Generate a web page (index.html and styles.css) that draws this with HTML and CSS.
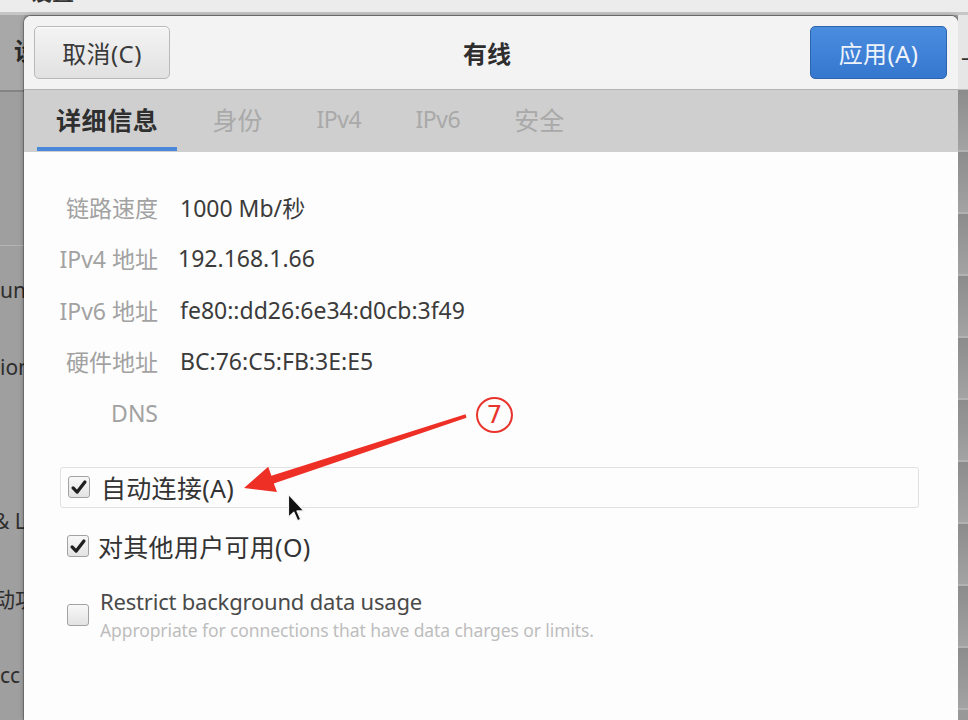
FILE: index.html
```html
<!DOCTYPE html>
<html lang="zh-CN">
<head>
<meta charset="utf-8">
<title>有线</title>
<link rel="stylesheet" href="styles.css">
</head>
<body>
<div class="screen">
  <div class="topbar"><span class="topbar-label">设置</span></div>
  <div class="main">
    <aside class="bg-left">
      <div class="bl-head"><span class="bl-title">设置</span></div>
      <ul class="bl-list">
        <li class="bl-item"></li>
        <li class="bl-item bl-sep"></li>
        <li class="bl-item"><span>und</span></li>
        <li class="bl-item"><span>ion</span></li>
        <li class="bl-item"></li>
        <li class="bl-item"><span class="shift">&amp; L</span></li>
        <li class="bl-item"><span class="shift">动功</span></li>
        <li class="bl-item"><span>cc</span></li>
      </ul>
    </aside>

    <section class="dialog">
      <header class="dlg-header">
        <button class="btn">取消(C)</button>
        <h1 class="dlg-title">有线</h1>
        <button class="btn btn-primary">应用(A)</button>
      </header>
      <nav class="tabs">
        <span class="tab active">详细信息</span>
        <span class="tab">身份</span>
        <span class="tab tab-latin">IPv4</span>
        <span class="tab tab-latin">IPv6</span>
        <span class="tab">安全</span>
      </nav>
      <div class="content">
        <dl class="details">
          <dt>链路速度</dt><dd>1000 Mb/秒</dd>
          <dt>IPv4 地址</dt><dd class="ip4">192.168.1.66</dd>
          <dt>IPv6 地址</dt><dd>fe80::dd26:6e34:d0cb:3f49</dd>
          <dt>硬件地址</dt><dd>BC:76:C5:FB:3E:E5</dd>
          <dt>DNS</dt><dd></dd>
        </dl>
        <div class="checks">
          <label class="check focused">
            <span class="box checked"><svg viewBox="0 0 22 22"><path d="M4.5 11.5 L9 16 L17.5 5"/></svg></span>
            <span class="check-label">自动连接(A)</span>
          </label>
          <label class="check second">
            <span class="box checked"><svg viewBox="0 0 22 22"><path d="M4.5 11.5 L9 16 L17.5 5"/></svg></span>
            <span class="check-label">对其他用户可用(O)</span>
          </label>
          <label class="check third">
            <span class="box"></span>
            <span class="check-text">
              <span class="check-title">Restrict background data usage</span>
              <span class="check-sub">Appropriate for connections that have data charges or limits.</span>
            </span>
          </label>
        </div>
      </div>
    </section>

    <aside class="bg-right">
      <div class="br-head"><span class="br-dash">–</span></div>
      <div class="br-lines">
        <i></i><i></i><i></i><i></i><i></i><i></i><i></i><i></i><i></i><i></i>
      </div>
    </aside>
  </div>

  <div class="badge">7</div>
  <svg class="arrow" width="968" height="720" viewBox="0 0 968 720">
    <polygon points="465.5,414.3 271.4,475.8 268.2,466.8 244,488 277,492 273.8,483.6 466.5,417.7"/>
  </svg>
  <svg class="cursor" width="20" height="30" viewBox="0 0 14 21">
    <path d="M1 1 L1 17 L4.8 13.4 L7.4 19.4 L9.6 18.4 L7 12.6 L12 12.6 Z"/>
  </svg>
</div>
</body>
</html>
```

FILE: styles.css
```css
* { box-sizing: border-box; }

html, body {
  margin: 0;
  padding: 0;
}

body {
  width: 968px;
  height: 720px;
  overflow: hidden;
  background: #9e9e9e;
  font-family: "Noto Sans", "Noto Sans CJK SC", sans-serif;
}

.screen {
  position: relative;
  width: 968px;
  height: 720px;
  overflow: hidden;
  display: flex;
  flex-direction: column;
}

/* ---------- top strip of the underlying window ---------- */
.topbar {
  height: 15px;
  flex: none;
  background: #ececec;
  border-bottom: 3px solid #c6c6c6;
  overflow: hidden;
}
.topbar-label {
  display: block;
  margin: -22px 0 0 30px;
  font-size: 22px;
  font-weight: 700;
  color: #333;
  line-height: 26px;
}

.main {
  flex: 1;
  display: flex;
  min-height: 0;
}

/* ---------- left part of dimmed settings window ---------- */
.bg-left {
  width: 24px;
  flex: none;
  background: #9f9f9f;
  overflow: hidden;
  display: flex;
  flex-direction: column;
}
.bl-head {
  height: 77px;
  flex: none;
  background: #a8a8a8;
  border-bottom: 2px solid #848484;
  display: flex;
  align-items: center;
  padding-left: 14px;
  white-space: nowrap;
}
.bl-title {
  font-size: 24px;
  font-weight: 700;
  color: #2a2a2a;
  margin-top: -6px;
}
.bl-list {
  list-style: none;
  margin: 0;
  padding: 0;
}
.bl-item {
  height: 77px;
  display: flex;
  align-items: center;
  padding-top: 10px;
  white-space: nowrap;
  font-size: 21px;
  color: #2e2e2e;
}
.bl-sep { border-bottom: 1px solid #b4b4b4; }
.bl-item .shift { margin-left: -6px; }

/* ---------- right part ---------- */
.bg-right {
  width: 10px;
  flex: none;
  display: flex;
  flex-direction: column;
  background: #989898;
  overflow: hidden;
}
.br-head {
  height: 75px;
  flex: none;
  background: #e6e6e6;
  border-bottom: 1px solid #bdbdbd;
  overflow: hidden;
}
.br-dash {
  display: block;
  margin: 28px 0 0 3px;
  font-size: 22px;
  line-height: 26px;
  color: #333;
}
.br-lines {
  display: flex;
  flex-direction: column;
}
.br-lines i {
  display: block;
  height: 62px;
  border-bottom: 2px solid #b2b2b2;
  background: linear-gradient(#8c8c8c, #a3a3a3);
}

/* ---------- dialog ---------- */
.dialog {
  flex: 1;
  min-width: 0;
  margin-top: 1px;
  background: #fdfdfd;
  border-radius: 7px 7px 0 0;
  box-shadow: 0 0 0 1px rgba(0,0,0,0.22), 0 0 5px rgba(0,0,0,0.35);
  overflow: hidden;
  display: flex;
  flex-direction: column;
}

.dlg-header {
  height: 74px;
  flex: none;
  display: flex;
  align-items: center;
  padding: 0 11px 1px 10px;
  background: #f3f3f3;
  border-bottom: 1px solid #b3b3b3;
}
.dlg-title {
  flex: 1;
  margin: 0;
  text-align: center;
  font-size: 24px;
  font-weight: 700;
  color: #2e2e2e;
  padding-right: 6px;
}
.btn {
  width: 136px;
  height: 53px;
  flex: none;
  font-family: inherit;
  font-size: 24px;
  color: #3a3a3a;
  background: linear-gradient(#f4f4f4, #e1e1e1);
  border: 1px solid #b9b9b9;
  border-radius: 5px;
  padding: 0;
  letter-spacing: 0.4px;
  box-shadow: 0 1px 0 rgba(255,255,255,0.8) inset;
}
.btn-primary {
  width: 137px;
  color: #eef3fb;
  background: linear-gradient(#4a8ddf, #3677cf);
  border-color: #2d64ad;
  box-shadow: none;
}

.tabs {
  height: 62px;
  flex: none;
  display: flex;
  gap: 16px;
  padding-left: 13px;
  background: #cfcfcf;
}
.tab {
  display: flex;
  align-items: center;
  padding: 0 19px;
  font-size: 25px;
  color: #a9a9a9;
  border-bottom: 4px solid transparent;
  margin-bottom: 1px;
}
.tab-latin {
  font-size: 23px;
  letter-spacing: -0.4px;
}
.tab.active {
  color: #2f2f2f;
  font-weight: 700;
  letter-spacing: 0.6px;
  border-bottom-color: #4a89da;
}

.content {
  flex: 1;
  padding: 29px 39px 0 34px;
}

.details {
  margin: 0;
  display: grid;
  grid-template-columns: 100px auto;
  grid-auto-rows: 51.5px;
  column-gap: 22px;
  align-items: center;
  font-size: 23px;
}
.details dt {
  text-align: right;
  color: #a2a2a2;
  white-space: nowrap;
}
.details dd {
  margin: 0;
  color: #3b3b3b;
  white-space: nowrap;
}
.details dd.ip4 { margin-left: -2px; }

.checks {
  margin-top: 28px;
  display: flex;
  flex-direction: column;
}
.check {
  display: flex;
  align-items: center;
  gap: 11px;
  margin-left: 2px;
  padding-left: 7px;
  height: 41px;
}
.check.focused {
  border: 1px solid #e1e1e1;
  border-radius: 3px;
}
.check.second {
  margin-top: 18px;
  gap: 9px;
}
.check.third {
  margin-top: 20px;
  height: auto;
}
.box {
  width: 22px;
  height: 22px;
  flex: none;
  border: 1px solid #a2a2a2;
  border-radius: 3px;
  background: linear-gradient(#f8f8f8, #e3e3e3);
  display: flex;
  align-items: center;
  justify-content: center;
}
.check.third .box { margin-top: 2px; }
.box svg {
  width: 21px;
  height: 21px;
}
.box svg path {
  fill: none;
  stroke: #1f1f1f;
  stroke-width: 3.6;
  stroke-linecap: round;
  stroke-linejoin: round;
}
.check-label {
  font-size: 25px;
  color: #333;
  white-space: nowrap;
  letter-spacing: 0.3px;
}
.check-text {
  display: flex;
  flex-direction: column;
}
.check-title {
  font-size: 22px;
  line-height: 28px;
  color: #4a4a4a;
  letter-spacing: -0.2px;
}
.check-sub {
  font-size: 17.5px;
  line-height: 22px;
  margin-top: 4px;
  color: #bdbdbd;
  letter-spacing: -0.1px;
}

/* ---------- annotation overlay ---------- */
.badge {
  position: absolute;
  left: 476px;
  top: 397px;
  width: 37px;
  height: 36px;
  border: 2px solid #e8342c;
  border-radius: 50%;
  color: #e8342c;
  font-family: "DejaVu Sans", sans-serif;
  font-size: 25px;
  line-height: 32px;
  text-align: center;
}
.arrow {
  position: absolute;
  left: 0;
  top: 0;
  pointer-events: none;
}
.arrow polygon { fill: #ee2f26; }

.cursor {
  position: absolute;
  left: 287px;
  top: 493px;
}
.cursor path {
  fill: #111;
  stroke: #f4f4f4;
  stroke-width: 0.9;
  stroke-linejoin: round;
}
```
